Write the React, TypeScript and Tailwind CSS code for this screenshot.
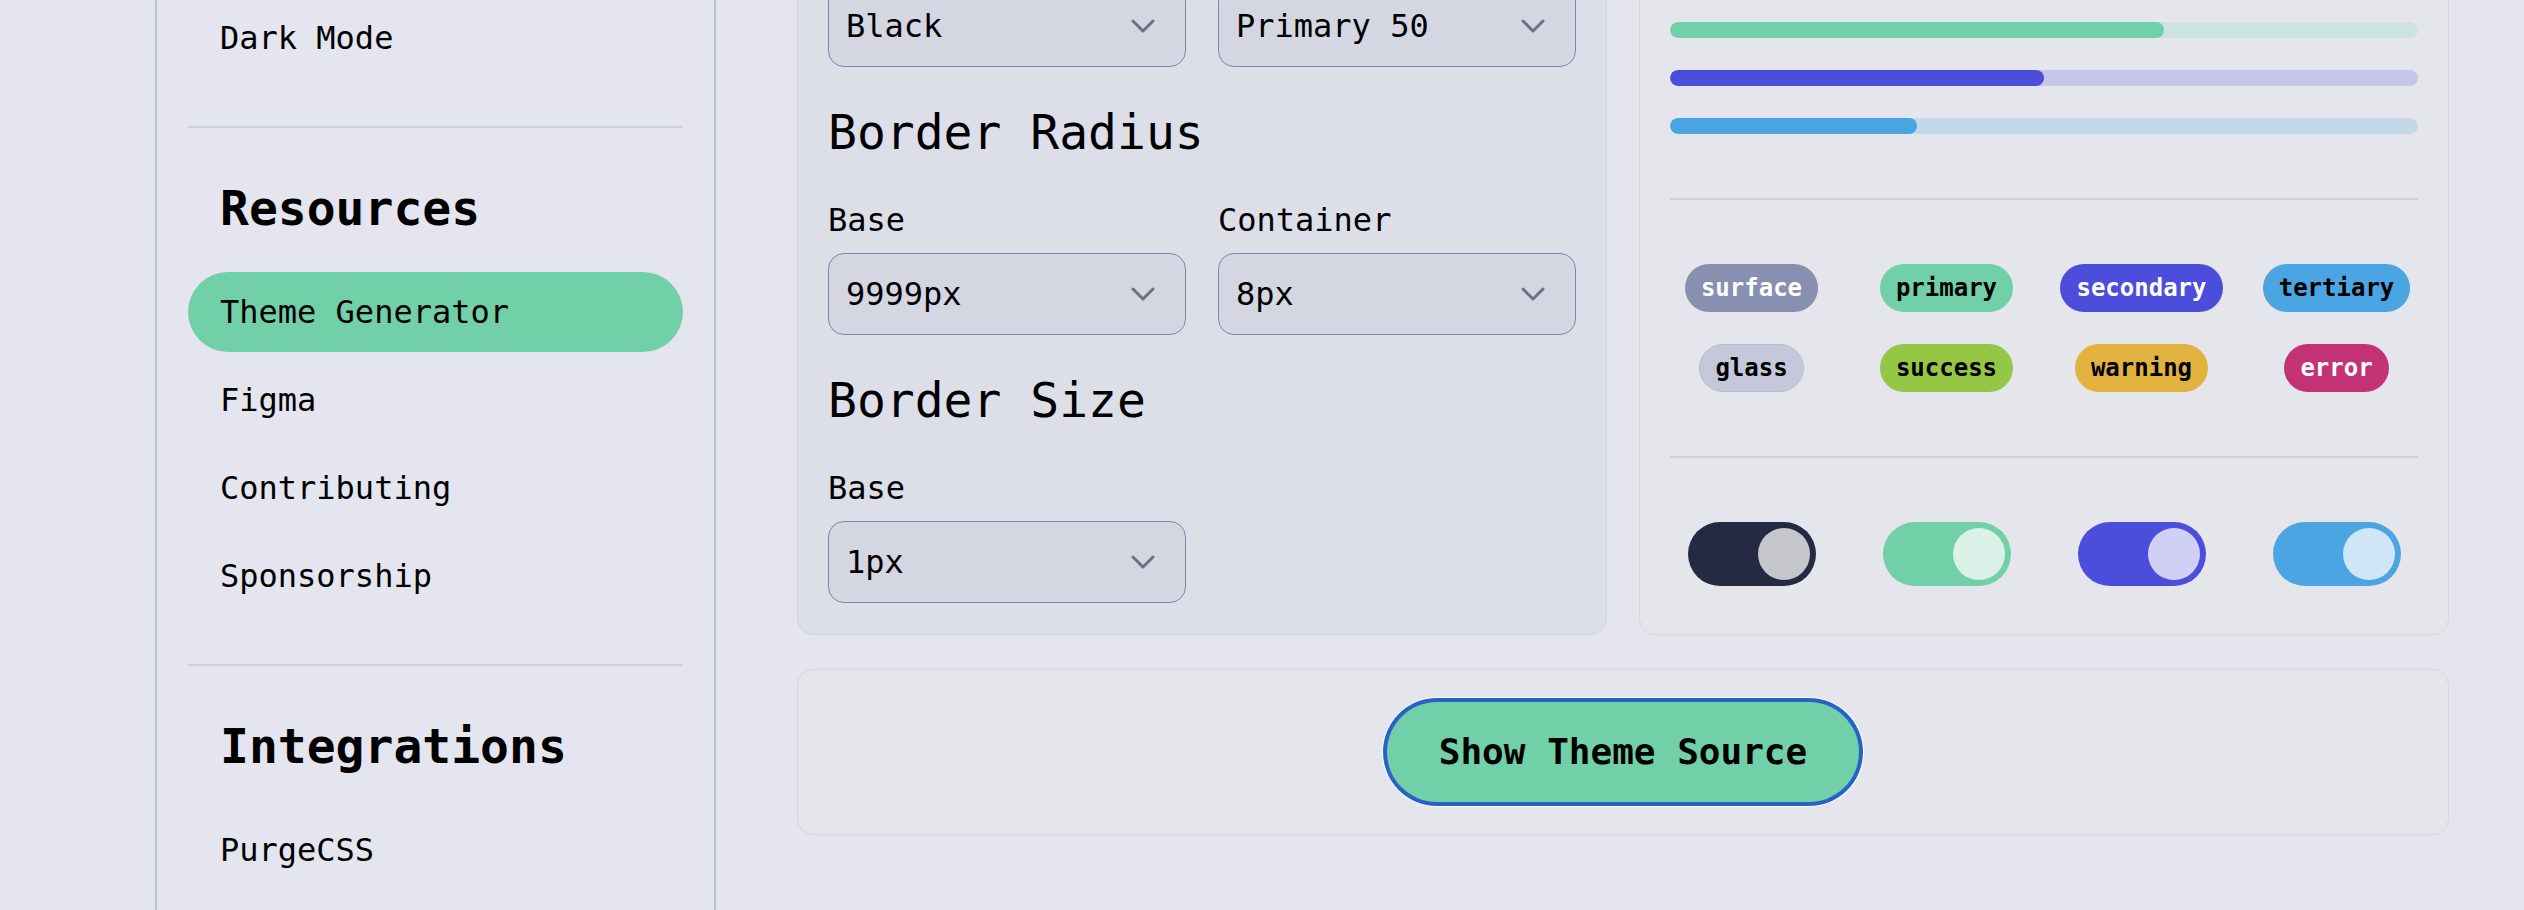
import React from "react";

const Chevron = () => (
  <svg width="24" height="14" viewBox="0 0 24 14" fill="none" aria-hidden="true">
    <path d="M2 2l10 10 10-10" stroke="#6b7182" strokeWidth="3" strokeLinecap="round" strokeLinejoin="round" />
  </svg>
);

const Select = ({ value, className = "" }: { value: string; className?: string }) => (
  <div
    className={`flex h-[82px] items-center justify-between rounded-2xl border border-[#7c87ae] bg-[#d4d6e2] pl-[17px] pr-[30px] text-[32px] leading-[48px] text-black ${className}`}
  >
    <span>{value}</span>
    <Chevron />
  </div>
);

const NavItem = ({ label, active = false }: { label: string; active?: boolean }) => (
  <li
    className={`flex h-20 items-center rounded-full px-8 text-[32px] leading-[48px] text-black ${
      active ? "bg-[#72d0a9]" : ""
    }`}
  >
    {label}
  </li>
);

const Divider = () => <div className="h-[2px] w-full bg-[#cbd1e0]" />;

const Field = ({ label, value }: { label: string; value: string }) => (
  <div className="flex flex-col">
    <span className="text-[32px] leading-[48px] text-black">{label}</span>
    <Select value={value} className="mt-[9px]" />
  </div>
);

const bars = [
  { fill: 66, track: "bg-[#cde3df]", color: "bg-[#72d0a9]" },
  { fill: 50, track: "bg-[#c6c6ea]", color: "bg-[#4d4ddc]" },
  { fill: 33, track: "bg-[#c4d8ea]", color: "bg-[#49a4e2]" },
];

const badges = [
  { label: "surface", cls: "bg-[#8790b0] text-white px-4 py-2" },
  { label: "primary", cls: "bg-[#72d0a9] text-black px-4 py-2" },
  { label: "secondary", cls: "bg-[#4d4ddc] text-white px-4 py-2" },
  { label: "tertiary", cls: "bg-[#4aa5e2] text-black px-4 py-2" },
  { label: "glass", cls: "bg-[#c4c8da] text-black border border-[#b6bcd0] px-[15px] py-[7px]" },
  { label: "success", cls: "bg-[#96c744] text-black px-4 py-2" },
  { label: "warning", cls: "bg-[#e2b23f] text-black px-4 py-2" },
  { label: "error", cls: "bg-[#c43276] text-white px-4 py-2" },
];

const toggles = [
  { track: "bg-[#252a42]", thumb: "bg-[#c6c7cd]" },
  { track: "bg-[#72d0a9]", thumb: "bg-[#d9f1e6]" },
  { track: "bg-[#4d4ddc]", thumb: "bg-[#d0d0f5]" },
  { track: "bg-[#4aa5e2]", thumb: "bg-[#cfe6f6]" },
];

export default function App() {
  return (
    <div className="flex h-[910px] w-full overflow-hidden bg-[#e4e5ee] font-['DejaVu_Sans_Mono',monospace] text-black">
      {/* left gutter */}
      <div className="w-[155px] shrink-0" />

      {/* sidebar */}
      <aside className="w-[561px] shrink-0 border-x-2 border-[#b9c0d6] px-[31px]">
        <ul className="-mt-[2px]">
          <NavItem label="Dark Mode" />
        </ul>
        <div className="mt-12">
          <Divider />
        </div>
        <section className="pt-12 pb-12">
          <h2 className="pl-8 text-[48px] font-bold leading-[64px]">Resources</h2>
          <ul className="mt-8 flex flex-col gap-2">
            <NavItem label="Theme Generator" active />
            <NavItem label="Figma" />
            <NavItem label="Contributing" />
            <NavItem label="Sponsorship" />
          </ul>
        </section>
        <Divider />
        <section className="pt-12">
          <h2 className="pl-8 text-[48px] font-bold leading-[64px]">Integrations</h2>
          <ul className="mt-8 flex flex-col gap-2">
            <NavItem label="PurgeCSS" />
          </ul>
        </section>
      </aside>

      {/* main */}
      <main className="-mt-[47px] flex-1 pl-[81px] pr-[75px]">
        <div className="grid grid-cols-2 gap-8">
          {/* left card */}
          <div className="rounded-2xl border border-[#d2d4df] bg-[#dcdee8] px-[30px] pt-[31px] pb-[31px]">
            <div className="grid grid-cols-2 gap-8">
              <Select value="Black" />
              <Select value="Primary 50" />
            </div>
            <h3 className="mt-[33px] text-[48px] leading-[64px]">Border Radius</h3>
            <div className="mt-8 grid grid-cols-2 gap-8">
              <Field label="Base" value="9999px" />
              <Field label="Container" value="8px" />
            </div>
            <h3 className="mt-[33px] text-[48px] leading-[64px]">Border Size</h3>
            <div className="mt-8 grid grid-cols-2 gap-8">
              <Field label="Base" value="1px" />
            </div>
          </div>

          {/* right card */}
          <div className="rounded-2xl border border-[#d7d8df] bg-[#e5e6ec] px-[30px] pt-[68px] pb-[47px]">
            <div className="flex flex-col gap-8">
              {bars.map((b, i) => (
                <div key={i} className={`h-4 w-full overflow-hidden rounded-full ${b.track}`}>
                  <div className={`h-full rounded-full ${b.color}`} style={{ width: `${b.fill}%` }} />
                </div>
              ))}
            </div>
            <div className="mt-16">
              <Divider />
            </div>
            <div className="mt-16 grid grid-cols-4 justify-items-center gap-8">
              {badges.map((b) => (
                <span
                  key={b.label}
                  className={`rounded-full text-[24px] font-bold leading-[32px] ${b.cls}`}
                >
                  {b.label}
                </span>
              ))}
            </div>
            <div className="mt-16">
              <Divider />
            </div>
            <div className="mt-16 grid grid-cols-4 justify-items-center gap-8">
              {toggles.map((t, i) => (
                <div key={i} className={`flex h-16 w-32 items-center justify-end rounded-full p-[6px] ${t.track}`}>
                  <div className={`h-[52px] w-[52px] rounded-full ${t.thumb}`} />
                </div>
              ))}
            </div>
          </div>
        </div>

        {/* bottom card */}
        <div className="mt-[34px] flex justify-center rounded-2xl border border-[#d7d8df] bg-[#e5e6ec] p-8">
          <button
            type="button"
            className="rounded-full bg-[#72d0a9] px-[52px] py-[22px] text-[36px] font-bold leading-[56px] text-black shadow-[0_0_0_4px_#2862c9,0_0_0_5px_#ffffff]"
          >
            Show Theme Source
          </button>
        </div>
      </main>
    </div>
  );
}
